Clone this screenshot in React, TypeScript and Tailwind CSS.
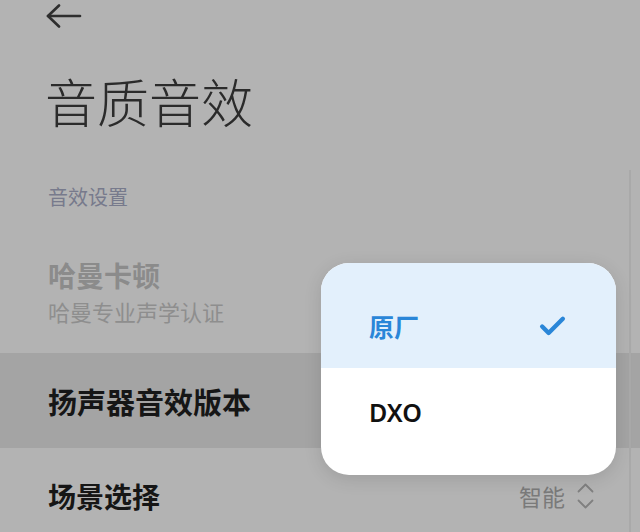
import { Check } from 'lucide-react'

const cjk = { fontFamily: '"Noto Sans CJK SC", "Noto Sans", sans-serif' }

function BackArrow() {
  return (
    <svg width="36" height="26" viewBox="0 0 36 26" fill="none" stroke="#2e2e2e" strokeWidth="2.6" strokeLinecap="round" strokeLinejoin="round">
      <path d="M2 12h32" />
      <path d="M13 1.5L2 12l11 10.5" />
    </svg>
  )
}

function UpDown() {
  return (
    <svg width="17" height="26" viewBox="0 0 17 26" fill="none" stroke="#808080" strokeWidth="1.8" strokeLinecap="round" strokeLinejoin="round">
      <path d="M1.5 8.5L8.5 1.5l7 7" />
      <path d="M1.5 17.5l7 7 7-7" />
    </svg>
  )
}

export default function App() {
  return (
    <div className="relative h-[532px] w-[640px] overflow-hidden bg-[#b3b3b3]" style={cjk}>
      <div className="flex h-[34px] items-start pl-[46px] pt-[4px]">
        <BackArrow />
      </div>

      <h1 className="mt-[36px] pl-[45px] text-[52px] font-light leading-[62px] text-[#2b2b2b]">
        音质音效
      </h1>

      <div className="mt-[50px] pl-[48px] text-[20px] leading-[30px] text-[#777a8c]">音效设置</div>

      <div className="mt-[45px] pl-[48px]">
        <div className="text-[28px] font-bold leading-[36px] text-[#8b8b8b]">哈曼卡顿</div>
        <div className="mt-[4px] text-[22px] leading-[28px] text-[#8e8e8e]">哈曼专业声学认证</div>
      </div>

      <div className="mt-[28px] flex h-[95px] items-center bg-[#a4a4a4] pl-[48px]">
        <span className="text-[29px] font-bold leading-[36px] text-[#161616]">扬声器音效版本</span>
      </div>

      <div className="flex h-[95px] items-center justify-between pl-[48px] pr-[46px]">
        <span className="text-[28px] font-bold leading-[36px] text-[#161616]">场景选择</span>
        <div className="flex items-center gap-[12px]">
          <span className="text-[23px] leading-[30px] text-[#7a7a7a]">智能</span>
          <UpDown />
        </div>
      </div>

      <div className="absolute right-[9px] top-[170px] bottom-0 w-[2px] bg-[#a9a9a9]" />

      <div className="absolute left-[321px] top-[263px] w-[295px] overflow-hidden rounded-[28px] bg-white shadow-[0_4px_18px_rgba(0,0,0,0.12)]">
        <div className="flex h-[105px] items-start justify-between bg-[#e3f0fc] pl-[48px] pr-[48px] pt-[48px]">
          <span className="text-[25px] font-bold leading-[30px] text-[#2a86d8]">原厂</span>
          <Check size={31} strokeWidth={3.4} color="#2a86d8" />
        </div>
        <div className="h-[107px] pl-[48px] pt-[29px]">
          <span className="text-[25px] font-semibold leading-[30px] text-[#111]" style={{ fontFamily: '"Noto Sans", "Noto Sans CJK SC", sans-serif' }}>
            DXO
          </span>
        </div>
      </div>
    </div>
  )
}
